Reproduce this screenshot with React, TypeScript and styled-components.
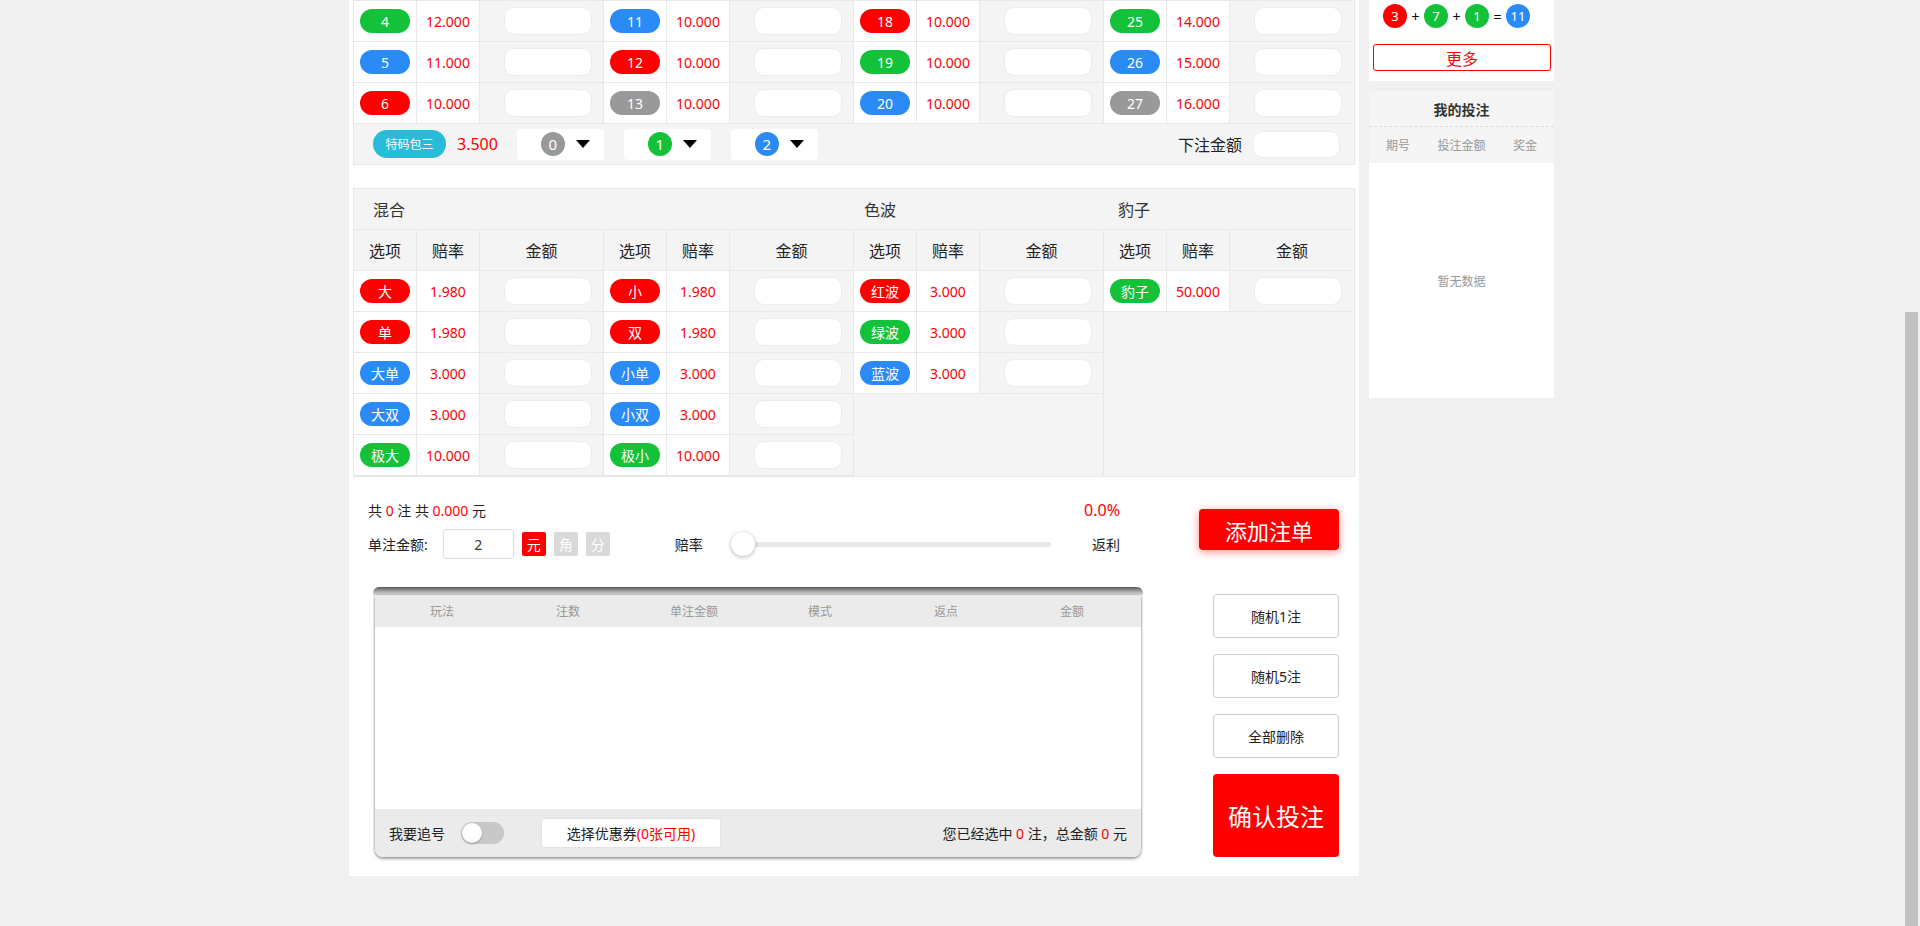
import React, { useLayoutEffect, useRef, useState } from 'react';
import styled, { createGlobalStyle } from 'styled-components';

const RED = '#ff0000';
const GREEN = '#14c23a';
const BLUE = '#2a8af6';
const GRAY = '#999999';
const TEAL = '#29bcd8';
const LINE = '#e8e8e8';
const CELL_BG = '#f4f4f4';

const GlobalStyle = createGlobalStyle`
  html, body { margin: 0; padding: 0; height: 100%; overflow: hidden; }
  body {
    font-family: "Microsoft YaHei", "Noto Sans", "Noto Sans CJK SC", sans-serif;
    font-size: 14px;
    color: #333;
    background: #f0f0f0;
  }
  * { box-sizing: border-box; }
  input { font-family: inherit; }
`;

const Screen = styled.div`
  display: flex;
  height: 100vh;
`;

const Viewport = styled.div`
  flex: 1;
  overflow-y: scroll;
  background: #f0f0f0;
  scrollbar-width: none;
  &::-webkit-scrollbar { display: none; }
`;

const Rail = styled.div`
  width: 17px;
  background: #f1f1f1;
  display: flex;
  flex-direction: column;
`;

const Thumb = styled.div`
  margin: 0 2px;
  background: #c1c1c1;
`;

const Wrap = styled.div`
  width: 1205px;
  margin: 0 auto;
  padding-bottom: 50px;
  display: flex;
  align-items: flex-start;
  gap: 10px;
`;

const Main = styled.div`
  width: 1010px;
  background: #fff;
  padding: 0 4px 19px;
`;

/* ---- lottery header (above the fold) ---- */
const LotteryHead = styled.div`
  height: 199px;
  display: flex;
  flex-direction: column;
`;

const HeadInfo = styled.div`
  height: 145px;
  display: flex;
  align-items: center;
  gap: 30px;
  padding: 0 20px;
  font-size: 16px;
`;

const LotteryName = styled.div`
  font-size: 26px;
  color: ${RED};
`;

const TabBar = styled.div`
  height: 54px;
  display: flex;
  align-items: center;
  gap: 8px;
  padding: 0 16px;
  border-bottom: 1px solid ${LINE};
`;

const Tab = styled.div<{ $on?: boolean }>`
  padding: 6px 18px;
  border-radius: 4px;
  background: ${p => (p.$on ? RED : CELL_BG)};
  color: ${p => (p.$on ? '#fff' : '#333')};
`;

/* ---- boards ---- */
const Board = styled.section<{ $mt: number }>`
  margin-top: ${p => p.$mt}px;
  border: 1px solid ${LINE};
  background: ${CELL_BG};
`;

const TitleRow = styled.div`
  display: flex;
  height: 41px;
  border-bottom: 1px solid ${LINE};
`;

const TitleCell = styled.div<{ $w: number; $pad: number }>`
  width: ${p => p.$w}px;
  padding-left: ${p => p.$pad}px;
  display: flex;
  align-items: center;
  font-size: 16px;
  color: #333;
`;

const Groups = styled.div`
  display: flex;
`;

const Group = styled.div`
  width: 250px;
  border-right: 1px solid ${LINE};
  &:last-child { border-right: none; }
`;

const Row = styled.div`
  display: grid;
  grid-template-columns: 63px 63px 1fr;
  height: 41px;
  border-bottom: 1px solid ${LINE};
`;

const Cell = styled.div<{ $white?: boolean; $pad?: number }>`
  display: flex;
  align-items: center;
  justify-content: center;
  padding-left: ${p => p.$pad || 0}px;
  background: ${p => (p.$white ? '#fff' : 'transparent')};
  border-right: 1px solid ${LINE};
  &:last-child { border-right: none; }
`;

const HeadCell = styled(Cell)`
  font-size: 16px;
  color: #222;
`;

const Badge = styled.span<{ $color: string }>`
  width: 50px;
  height: 24px;
  border-radius: 12px;
  background: ${p => p.$color};
  color: #fff;
  font-size: 14px;
  display: flex;
  align-items: center;
  justify-content: center;
`;

const Odds = styled.span`
  color: ${RED};
  font-size: 14px;
`;

const MoneyInput = styled.input`
  width: 88px;
  height: 28px;
  border: 1px solid #ececec;
  border-radius: 10px;
  background: #fff;
  outline: none;
`;

const PackBar = styled.div`
  height: 40px;
  display: flex;
  align-items: center;
  padding: 0 14px 0 19px;
`;

const PackPill = styled.span`
  width: 73px;
  height: 28px;
  border-radius: 14px;
  background: ${TEAL};
  color: #fff;
  font-size: 12px;
  display: flex;
  align-items: center;
  justify-content: center;
`;

const PackOdds = styled.span`
  margin-left: 11px;
  color: ${RED};
  font-size: 16px;
`;

const PickSelect = styled.div<{ $first?: boolean }>`
  margin-left: ${p => (p.$first ? 19 : 20)}px;
  width: 87px;
  height: 31px;
  border-radius: 4px;
  background: #fff;
  display: flex;
  align-items: center;
  padding-left: 24px;
`;

const PickBall = styled.span<{ $color: string }>`
  width: 24px;
  height: 24px;
  border-radius: 50%;
  background: ${p => p.$color};
  color: #fff;
  font-size: 15px;
  display: flex;
  align-items: center;
  justify-content: center;
`;

const Caret = styled.span`
  margin-left: 11px;
  width: 0;
  height: 0;
  border-left: 7.5px solid transparent;
  border-right: 7.5px solid transparent;
  border-top: 8px solid #000;
`;

const PackLabel = styled.span`
  margin-left: auto;
  font-size: 16px;
  color: #222;
`;

const PackInput = styled(MoneyInput)`
  margin-left: 11px;
  width: 87px;
  height: 27px;
`;

/* ---- bet area ---- */
const BetArea = styled.div`
  display: flex;
`;

const LeftCol = styled.div`
  width: 792px;
  padding-top: 23px;
`;

const SumRow = styled.div<{ $mt?: number; $h: number }>`
  margin-top: ${p => p.$mt || 0}px;
  height: ${p => p.$h}px;
  padding: 0 25px 0 15px;
  display: flex;
  align-items: center;
  color: #222;
`;

const Red = styled.span`
  color: ${RED};
`;

const Percent = styled.span`
  margin-left: auto;
  color: ${RED};
  font-size: 16px;
`;

const UnitInput = styled.input`
  margin-left: 15px;
  width: 71px;
  height: 30px;
  border: 1px solid #ddd;
  border-radius: 3px;
  text-align: center;
  font-size: 14px;
  color: #333;
  outline: none;
`;

const UnitBtn = styled.span<{ $on?: boolean }>`
  margin-left: 8px;
  width: 24px;
  height: 24px;
  border-radius: 2px;
  background: ${p => (p.$on ? RED : '#d9d9d9')};
  color: #fff;
  font-size: 14px;
  display: flex;
  align-items: center;
  justify-content: center;
`;

const RateLabel = styled.span`
  margin-left: 65px;
`;

const Slider = styled.div`
  position: relative;
  margin-left: 28px;
  width: 320px;
  height: 24px;
  display: flex;
  align-items: center;
`;

const SliderTrack = styled.div`
  width: 100%;
  height: 5px;
  border-radius: 3px;
  background: #e8e8e8;
`;

const SliderKnob = styled.div`
  position: absolute;
  left: 0;
  top: 0;
  width: 24px;
  height: 24px;
  border-radius: 50%;
  background: #fff;
  box-shadow: 0 1px 4px rgba(0, 0, 0, 0.3);
`;

const Rebate = styled.span`
  margin-left: auto;
`;

const Cart = styled.div`
  margin: 28px 0 0 20px;
  width: 770px;
`;

const CartSlot = styled.div`
  height: 8px;
  border-radius: 6px 6px 0 0;
  background: linear-gradient(to bottom, #5a5a5a, #9a9a9a 45%, #dedede);
`;

const CartBody = styled.div`
  margin: 0 2px;
  border-radius: 0 0 8px 8px;
  overflow: hidden;
  box-shadow: 0 2px 3px rgba(0, 0, 0, 0.35), 1px 0 2px rgba(0, 0, 0, 0.15), -1px 0 2px rgba(0, 0, 0, 0.15);
`;

const CartHead = styled.div`
  height: 32px;
  background: #ebebeb;
  display: grid;
  grid-template-columns: repeat(6, 1fr);
  align-items: center;
  padding: 0 6px 0 4px;
  font-size: 12px;
  color: #999;
  text-align: center;
`;

const CartList = styled.div`
  height: 182px;
  background: #fff;
`;

const CartFoot = styled.div`
  height: 48px;
  background: #ebebeb;
  display: flex;
  align-items: center;
  padding: 0 14px;
  color: #222;
`;

const Toggle = styled.div`
  margin-left: 16px;
  width: 43px;
  height: 22px;
  border-radius: 11px;
  background: #c8c8c8;
  padding: 1px;
  display: flex;
`;

const ToggleKnob = styled.div`
  width: 20px;
  height: 20px;
  border-radius: 50%;
  background: #fff;
  box-shadow: 0 1px 2px rgba(0, 0, 0, 0.3);
`;

const CouponBtn = styled.div`
  margin-left: 37px;
  width: 180px;
  height: 30px;
  background: #fff;
  border: 1px solid #e3e3e3;
  border-radius: 3px;
  display: flex;
  align-items: center;
  justify-content: center;
  color: #222;
`;

const CartTotal = styled.span`
  margin-left: auto;
`;

const RightCol = styled.div`
  flex: 1;
  display: flex;
  flex-direction: column;
  align-items: flex-end;
  padding: 32px 16px 0 0;
`;

const AddBtn = styled.div`
  width: 140px;
  height: 41px;
  border-radius: 4px;
  background: ${RED};
  color: #fff;
  font-size: 22px;
  display: flex;
  align-items: center;
  justify-content: center;
  box-shadow: 0 2px 8px rgba(255, 0, 0, 0.45);
`;

const SideBtn = styled.div<{ $mt: number }>`
  margin-top: ${p => p.$mt}px;
  width: 126px;
  height: 44px;
  border: 1px solid #ccc;
  border-radius: 4px;
  background: #fff;
  display: flex;
  align-items: center;
  justify-content: center;
  color: #222;
`;

const ConfirmBtn = styled.div`
  margin-top: 16px;
  width: 126px;
  height: 83px;
  border-radius: 4px;
  background: ${RED};
  color: #fff;
  font-size: 24px;
  display: flex;
  align-items: center;
  justify-content: center;
`;

/* ---- sidebar ---- */
const Side = styled.div`
  width: 185px;
  display: flex;
  flex-direction: column;
  gap: 10px;
`;

const DrawBox = styled.div`
  background: #fff;
  padding: 0 3px 10px 4px;
`;

const DrawTitle = styled.div`
  height: 52px;
  display: flex;
  align-items: center;
  justify-content: center;
  font-weight: bold;
`;

const Period = styled.div`
  height: 18px;
  padding-left: 10px;
  font-size: 12px;
  color: #999;
`;

const BallRow = styled.div`
  height: 32px;
  display: flex;
  align-items: center;
  padding-left: 10px;
`;

const Ball = styled.span<{ $color: string }>`
  width: 24px;
  height: 24px;
  border-radius: 50%;
  background: ${p => p.$color};
  color: #fff;
  font-size: 13px;
  display: flex;
  align-items: center;
  justify-content: center;
`;

const Sign = styled.span`
  width: 17px;
  text-align: center;
  font-size: 14px;
  color: #000;
`;

const MoreBtn = styled.div`
  margin-top: 12px;
  height: 27px;
  border: 1px solid ${RED};
  border-radius: 3px;
  color: ${RED};
  font-size: 16px;
  display: flex;
  align-items: center;
  justify-content: center;
`;

const BetsBox = styled.div`
  background: #fff;
`;

const BetsTitle = styled.div`
  height: 36px;
  background: #f5f5f5;
  border-bottom: 1px dashed #dcdcdc;
  display: flex;
  align-items: center;
  justify-content: center;
  font-weight: bold;
  color: #333;
`;

const BetsCols = styled.div`
  height: 36px;
  background: #f5f5f5;
  display: grid;
  grid-template-columns: 1fr 1.2fr 1fr;
  align-items: center;
  text-align: center;
  font-size: 12px;
  color: #999;
`;

const BetsEmpty = styled.div`
  height: 235px;
  display: flex;
  align-items: center;
  justify-content: center;
  font-size: 12px;
  color: #999;
`;

/* ---- data ---- */
const numColor = (n: number) => {
  if ([0, 13, 14, 27].includes(n)) return GRAY;
  if ([3, 6, 9, 12, 15, 18, 21, 24].includes(n)) return RED;
  if ([1, 4, 7, 10, 16, 19, 22, 25].includes(n)) return GREEN;
  return BLUE;
};

const numOdds: { [k: number]: string } = {
  0: '16.000', 1: '15.000', 2: '14.000', 3: '13.000', 4: '12.000', 5: '11.000', 6: '10.000',
  21: '10.000', 22: '11.000', 23: '12.000', 24: '13.000', 25: '14.000', 26: '15.000', 27: '16.000',
};

interface Opt {
  label: string;
  color: string;
  odds: string;
}

const numberGroups: Opt[][] = [0, 1, 2, 3].map(g =>
  Array.from({ length: 7 }, (_, i) => {
    const n = g * 7 + i;
    return { label: String(n), color: numColor(n), odds: numOdds[n] || '10.000' };
  })
);

const mixGroups: Opt[][] = [
  [
    { label: '大', color: RED, odds: '1.980' },
    { label: '单', color: RED, odds: '1.980' },
    { label: '大单', color: BLUE, odds: '3.000' },
    { label: '大双', color: BLUE, odds: '3.000' },
    { label: '极大', color: GREEN, odds: '10.000' },
  ],
  [
    { label: '小', color: RED, odds: '1.980' },
    { label: '双', color: RED, odds: '1.980' },
    { label: '小单', color: BLUE, odds: '3.000' },
    { label: '小双', color: BLUE, odds: '3.000' },
    { label: '极小', color: GREEN, odds: '10.000' },
  ],
  [
    { label: '红波', color: RED, odds: '3.000' },
    { label: '绿波', color: GREEN, odds: '3.000' },
    { label: '蓝波', color: BLUE, odds: '3.000' },
  ],
  [{ label: '豹子', color: GREEN, odds: '50.000' }],
];

const history = [
  { no: '3155931', balls: [2, 5, 8] },
  { no: '3155930', balls: [6, 1, 0] },
  { no: '3155929', balls: [9, 9, 4] },
  { no: '3155928', balls: [1, 3, 7] },
  { no: '3155927', balls: [0, 8, 5] },
  { no: '3155926', balls: [4, 4, 2] },
  { no: '3155925', balls: [7, 6, 9] },
  { no: '3155924', balls: [5, 2, 3] },
  { no: '3155923', balls: [3, 7, 1] },
];

const OptionGroup = ({ rows }: { rows: Opt[] }) => (
  <Group>
    <Row>
      <HeadCell>选项</HeadCell>
      <HeadCell>赔率</HeadCell>
      <HeadCell>金额</HeadCell>
    </Row>
    {rows.map(o => (
      <Row key={o.label}>
        <Cell $white>
          <Badge $color={o.color}>{o.label}</Badge>
        </Cell>
        <Cell $white>
          <Odds>{o.odds}</Odds>
        </Cell>
        <Cell $pad={12}>
          <MoneyInput />
        </Cell>
      </Row>
    ))}
  </Group>
);

const DrawLine = ({ no, balls }: { no: string; balls: number[] }) => {
  const sum = balls[0] + balls[1] + balls[2];
  return (
    <div>
      <Period>第 {no} 期</Period>
      <BallRow>
        <Ball $color={numColor(balls[0])}>{balls[0]}</Ball>
        <Sign>+</Sign>
        <Ball $color={numColor(balls[1])}>{balls[1]}</Ball>
        <Sign>+</Sign>
        <Ball $color={numColor(balls[2])}>{balls[2]}</Ball>
        <Sign>=</Sign>
        <Ball $color={numColor(sum)}>{sum}</Ball>
      </BallRow>
    </div>
  );
};

const App = () => {
  const viewRef = useRef<HTMLDivElement>(null);
  const [bar, setBar] = useState({ top: 0, height: 0 });

  const updateBar = () => {
    const el = viewRef.current;
    if (!el) return;
    const h = el.clientHeight;
    setBar({
      top: (el.scrollTop / el.scrollHeight) * h,
      height: (h * h) / el.scrollHeight,
    });
  };

  useLayoutEffect(() => {
    const el = viewRef.current;
    if (el) el.scrollTop = el.scrollHeight;
    updateBar();
  }, []);

  return (
    <Screen>
      <GlobalStyle />
      <Viewport ref={viewRef} onScroll={updateBar}>
        <Wrap>
          <Main>
            <LotteryHead>
              <HeadInfo>
                <LotteryName>加拿大28</LotteryName>
                <span>第 3155932 期</span>
                <span>距离封盘 <Red>00:02:31</Red></span>
              </HeadInfo>
              <TabBar>
                <Tab $on>特码</Tab>
                <Tab>混合</Tab>
                <Tab>色波</Tab>
                <Tab>豹子</Tab>
                <Tab>特码包三</Tab>
              </TabBar>
            </LotteryHead>

            <Board $mt={25}>
              <TitleRow>
                <TitleCell $w={1000} $pad={19}>特码</TitleCell>
              </TitleRow>
              <Groups>
                {numberGroups.map((rows, i) => (
                  <OptionGroup key={i} rows={rows} />
                ))}
              </Groups>
              <PackBar>
                <PackPill>特码包三</PackPill>
                <PackOdds>3.500</PackOdds>
                <PickSelect $first>
                  <PickBall $color={GRAY}>0</PickBall>
                  <Caret />
                </PickSelect>
                <PickSelect>
                  <PickBall $color={GREEN}>1</PickBall>
                  <Caret />
                </PickSelect>
                <PickSelect>
                  <PickBall $color={BLUE}>2</PickBall>
                  <Caret />
                </PickSelect>
                <PackLabel>下注金额</PackLabel>
                <PackInput />
              </PackBar>
            </Board>

            <Board $mt={23}>
              <TitleRow>
                <TitleCell $w={500} $pad={19}>混合</TitleCell>
                <TitleCell $w={250} $pad={10}>色波</TitleCell>
                <TitleCell $w={250} $pad={14}>豹子</TitleCell>
              </TitleRow>
              <Groups>
                {mixGroups.map((rows, i) => (
                  <OptionGroup key={i} rows={rows} />
                ))}
              </Groups>
            </Board>

            <BetArea>
              <LeftCol>
                <SumRow $h={20}>
                  <span>
                    共 <Red>0</Red> 注 共 <Red>0.000</Red> 元
                  </span>
                  <Percent>0.0%</Percent>
                </SumRow>
                <SumRow $mt={9} $h={30}>
                  <span>单注金额:</span>
                  <UnitInput defaultValue="2" />
                  <UnitBtn $on>元</UnitBtn>
                  <UnitBtn>角</UnitBtn>
                  <UnitBtn>分</UnitBtn>
                  <RateLabel>赔率</RateLabel>
                  <Slider>
                    <SliderTrack />
                    <SliderKnob />
                  </Slider>
                  <Rebate>返利</Rebate>
                </SumRow>
                <Cart>
                  <CartSlot />
                  <CartBody>
                    <CartHead>
                      <span>玩法</span>
                      <span>注数</span>
                      <span>单注金额</span>
                      <span>模式</span>
                      <span>返点</span>
                      <span>金额</span>
                    </CartHead>
                    <CartList />
                    <CartFoot>
                      <span>我要追号</span>
                      <Toggle>
                        <ToggleKnob />
                      </Toggle>
                      <CouponBtn>
                        选择优惠券<Red>(0张可用)</Red>
                      </CouponBtn>
                      <CartTotal>
                        您已经选中 <Red>0</Red> 注，总金额 <Red>0</Red> 元
                      </CartTotal>
                    </CartFoot>
                  </CartBody>
                </Cart>
              </LeftCol>
              <RightCol>
                <AddBtn>添加注单</AddBtn>
                <SideBtn $mt={44}>随机1注</SideBtn>
                <SideBtn $mt={16}>随机5注</SideBtn>
                <SideBtn $mt={16}>全部删除</SideBtn>
                <ConfirmBtn>确认投注</ConfirmBtn>
              </RightCol>
            </BetArea>
          </Main>

          <Side>
            <DrawBox>
              <DrawTitle>最新开奖</DrawTitle>
              {history.map(h => (
                <DrawLine key={h.no} no={h.no} balls={h.balls} />
              ))}
              <MoreBtn>更多</MoreBtn>
            </DrawBox>
            <BetsBox>
              <BetsTitle>我的投注</BetsTitle>
              <BetsCols>
                <span>期号</span>
                <span>投注金额</span>
                <span>奖金</span>
              </BetsCols>
              <BetsEmpty>暂无数据</BetsEmpty>
            </BetsBox>
          </Side>
        </Wrap>
      </Viewport>
      <Rail>
        <div style={{ height: bar.top }} />
        <Thumb style={{ height: bar.height }} />
      </Rail>
    </Screen>
  );
};

export default App;
